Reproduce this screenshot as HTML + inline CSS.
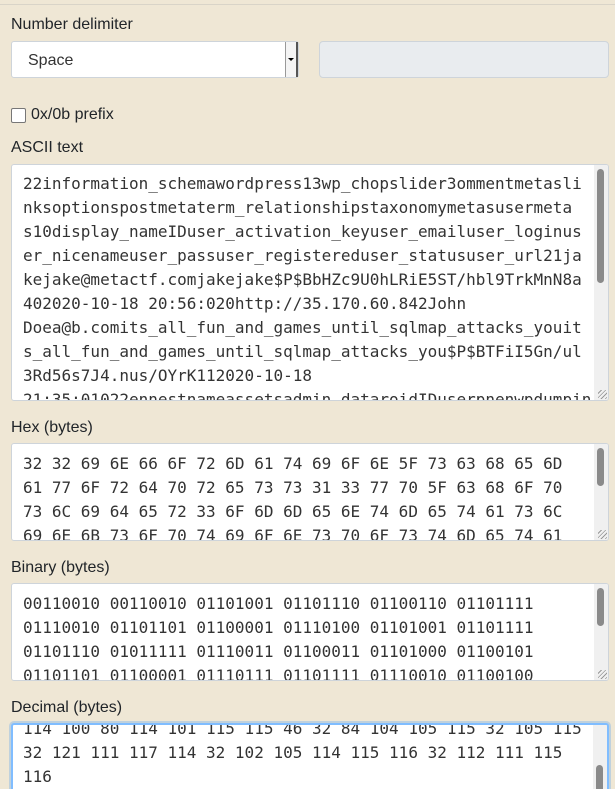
<!DOCTYPE html>
<html><head><style>
html,body{margin:0;width:615px;height:789px;overflow:hidden}
body{background:#efe7d5;font-family:"Liberation Sans",sans-serif;color:#212529;position:relative}
.topline{position:absolute;left:0;top:0;width:615px;height:4px;background:#efe7d5;border-bottom:1px solid #d9d4c8}
.lbl{position:absolute;left:11px;font-size:16px;line-height:20px}
.ta{position:absolute;left:11px;width:598px;background:#fff;border:1px solid #ced4da;border-radius:3px;overflow:hidden;box-sizing:border-box}
.ta .in{position:absolute;left:11px;width:575px;font-family:"DejaVu Sans Mono",monospace;font-size:16px;line-height:24px;color:#333;white-space:pre}
.sb{position:absolute;right:0;top:0;bottom:0;width:14px;background:#f0f0f0}
.th{position:absolute;left:3px;width:7px;background:#8a8a8a;border-radius:4px}
.grip{position:absolute;right:1px;bottom:1px;width:9px;height:9px;background:repeating-linear-gradient(135deg,transparent 0 2px,#999 2px 3px)}
</style></head><body>
<div class="topline"></div>
<div class="lbl" style="top:15px">Number delimiter</div>
<div style="position:absolute;left:11px;top:41px;width:288px;height:37px;box-sizing:border-box;background:#fff;border:1px solid #ced4da;border-radius:3px">
<span style="position:absolute;left:16px;top:10px;font-size:16px;color:#333">Space</span>
<div style="position:absolute;right:0;top:0;width:10px;height:35px;background:#f4f4f4;border-left:1px solid #999;border-right:2px solid #555"></div>
<div style="position:absolute;right:4px;top:16px;border-left:3px solid transparent;border-right:3px solid transparent;border-top:3px solid #000"></div>
</div>
<div style="position:absolute;left:319px;top:41px;width:290px;height:37px;box-sizing:border-box;background:#e9ecef;border:1px solid #ced4da;border-radius:4px"></div>
<div style="position:absolute;left:11px;top:108px;width:13px;height:13px;background:#fff;border:1px solid #777;border-radius:2px"></div>
<div class="lbl" style="top:105px;left:31px">0x/0b prefix</div>
<div class="lbl" style="top:138px">ASCII text</div>
<div class="ta" style="top:164px;height:237px"><div class="in" style="top:7px">22information_schemawordpress13wp_chopslider3ommentmetasli
nksoptionspostmetaterm_relationshipstaxonomymetasusermeta
s10display_nameIDuser_activation_keyuser_emailuser_loginus
er_nicenameuser_passuser_registereduser_statususer_url21ja
kejake@metactf.comjakejake$P$BbHZc9U0hLRiE5ST/hbl9TrkMnN8a
402020-10-18 20:56:020http://35.170.60.842John
Doea@b.comits_all_fun_and_games_until_sqlmap_attacks_youit
s_all_fun_and_games_until_sqlmap_attacks_you$P$BTFiI5Gn/ul
3Rd56s7J4.nus/OYrK112020-10-18
21:35:01022ennestnameassetsadmin_dataroidIDuserpnenwpdumpin</div><div class="sb"><div class="th" style="top:4px;height:114px"></div></div><div class="grip"></div></div>
<div class="lbl" style="top:418px">Hex (bytes)</div>
<div class="ta" style="top:443px;height:98px"><div class="in" style="top:8px">32 32 69 6E 66 6F 72 6D 61 74 69 6F 6E 5F 73 63 68 65 6D
61 77 6F 72 64 70 72 65 73 73 31 33 77 70 5F 63 68 6F 70
73 6C 69 64 65 72 33 6F 6D 6D 65 6E 74 6D 65 74 61 73 6C
69 6E 6B 73 6F 70 74 69 6F 6E 73 70 6F 73 74 6D 65 74 61</div><div class="sb"><div class="th" style="top:4px;height:38px"></div></div><div class="grip"></div></div>
<div class="lbl" style="top:558px">Binary (bytes)</div>
<div class="ta" style="top:583px;height:98px"><div class="in" style="top:8px">00110010 00110010 01101001 01101110 01100110 01101111
01110010 01101101 01100001 01110100 01101001 01101111
01101110 01011111 01110011 01100011 01101000 01100101
01101101 01100001 01110111 01101111 01110010 01100100</div><div class="sb"><div class="th" style="top:4px;height:38px"></div></div><div class="grip"></div></div>
<div class="lbl" style="top:698px">Decimal (bytes)</div>
<div class="ta" style="top:723px;height:66px;border:2px solid #80bdff;border-bottom:none;border-radius:3px 3px 0 0;box-shadow:0 0 0 2px rgba(0,123,255,.2)"><div class="in" style="top:-8px;left:10px">114 100 80 114 101 115 115 46 32 84 104 105 115 32 105 115
32 121 111 117 114 32 102 105 114 115 116 32 112 111 115
116</div><div class="sb"><div class="th" style="top:40px;height:40px"></div></div></div>
</body></html>
